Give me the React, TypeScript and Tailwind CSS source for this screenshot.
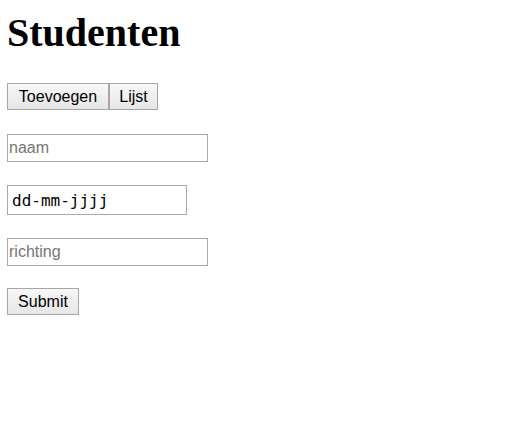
export default function App() {
  const btn =
    "h-[27px] border border-[#a6a6a6] bg-gradient-to-b from-[#f8f8f8] to-[#e6e6e6] text-center text-[16px] leading-[18px] text-black";
  const input =
    "block h-[28px] w-[201px] border border-[#a9a9a9] px-[1px] text-[16px] text-black outline-none placeholder:text-[#757575]";

  return (
    <div className="min-h-screen bg-white pl-[7px] font-['Liberation_Sans',Arial,sans-serif] text-black">
      <h1 className="pt-[10px] font-['Liberation_Serif','Times_New_Roman',serif] text-[40px] font-bold leading-[46px]">
        Studenten
      </h1>

      <div className="mt-[27px] flex">
        <button type="button" className={`${btn} w-[102px]`}>
          Toevoegen
        </button>
        <button type="button" className={`${btn} w-[49px]`}>
          Lijst
        </button>
      </div>

      <form className="mt-[24px] flex flex-col items-start">
        <input type="text" placeholder="naam" className={input} />
        <input
          type="text"
          readOnly
          value="dd-mm-jjjj"
          className="mt-[23px] block h-[30px] w-[180px] border border-[#a9a9a9] px-[4px] font-['DejaVu_Sans_Mono',monospace] text-[16px] text-black outline-none"
        />
        <input type="text" placeholder="richting" className={`${input} mt-[23px]`} />
        <button type="submit" className={`${btn} mt-[22px] w-[72px]`}>
          Submit
        </button>
      </form>
    </div>
  );
}
